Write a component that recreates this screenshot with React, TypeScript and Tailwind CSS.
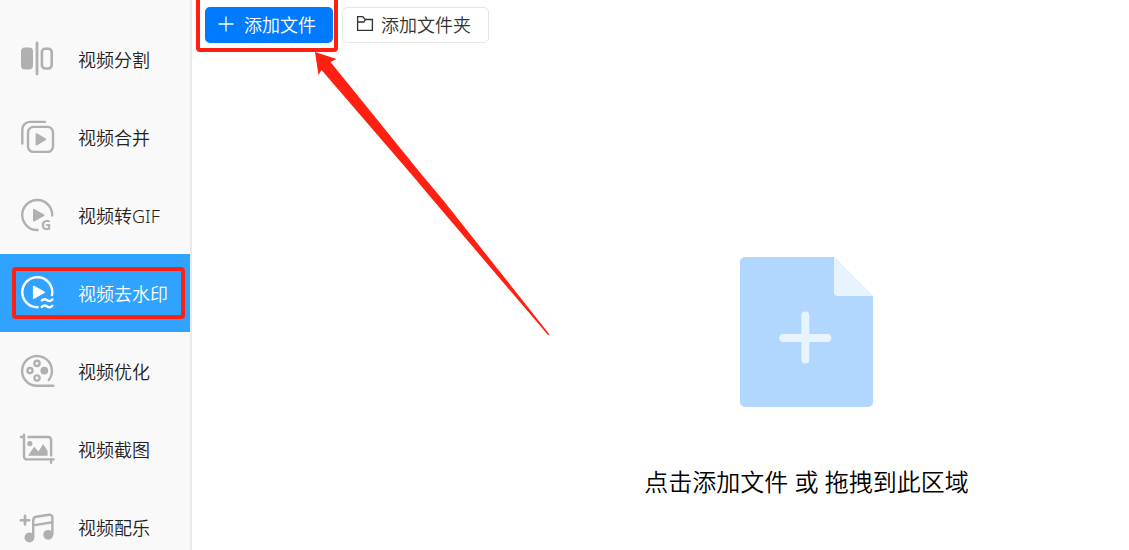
import { useRef, useState, type ReactNode } from "react";
import clsx from "clsx";

const FONT = "font-['Noto_Sans','Noto_Sans_CJK_SC',sans-serif] font-[350]";

/** Shared 36px canvas for the sidebar icons; strokes follow the text colour. */
function ToolIcon({ children }: { children: ReactNode }) {
  return (
    <svg
      viewBox="0 0 36 36"
      className="size-9 shrink-0"
      fill="none"
      stroke="currentColor"
      strokeWidth="2.4"
      strokeLinecap="round"
      strokeLinejoin="round"
      aria-hidden="true"
    >
      {children}
    </svg>
  );
}

function SplitIcon() {
  return (
    <ToolIcon>
      <rect x="2" y="6.5" width="12" height="22" rx="4" fill="currentColor" stroke="none" />
      <path d="M18 2v31" strokeWidth="2.8" />
      <rect x="22.9" y="7.7" width="9.8" height="19.8" rx="3.4" strokeWidth="2.6" />
    </ToolIcon>
  );
}

function MergeIcon() {
  return (
    <ToolIcon>
      <path d="M3.3 24.5V10.5a7.6 7.6 0 0 1 7.6-7.6H26" />
      <rect x="9" y="7.9" width="25" height="25" rx="5.5" />
      <path d="M17.4 14.9v10.8l9-5.4z" fill="currentColor" strokeWidth="1.6" />
    </ToolIcon>
  );
}

function GifIcon() {
  return (
    <ToolIcon>
      <path d="M33.2 18.5A15 15 0 1 0 18.6 33" />
      <path d="M14.8 12.6v11.2l10-5.6z" fill="currentColor" strokeWidth="1.6" />
      <text
        x="22"
        y="33.4"
        fill="currentColor"
        stroke="none"
        className="font-['Open_Sans',sans-serif] text-[14px] font-bold"
      >
        G
      </text>
    </ToolIcon>
  );
}

function WatermarkIcon() {
  return (
    <ToolIcon>
      <path d="M33 20A15 15 0 1 0 18.6 32.2" />
      <path d="M14.8 11.6v11.4l10.2-5.7z" fill="currentColor" strokeWidth="1.8" />
      <path d="M22.8 25.5c1.8-1.8 3.6-1.6 5.4-.3s3.4 1.3 5.2-.7M22.8 31.8c1.8-1.8 3.6-1.6 5.4-.3s3.4 1.3 5.2-.7" />
    </ToolIcon>
  );
}

function ReelIcon() {
  return (
    <ToolIcon>
      <path d="M29.8 27A14.9 14.9 0 1 0 18 32.8h16.4" />
      <circle cx="18" cy="10.4" r="2.6" />
      <circle cx="11" cy="17.6" r="2.6" />
      <circle cx="18" cy="25" r="2.6" />
      <circle cx="25.3" cy="17.6" r="3.9" fill="currentColor" stroke="none" />
    </ToolIcon>
  );
}

function SnapshotIcon() {
  return (
    <ToolIcon>
      <path d="M2 6h3M5 3.6v22a2.8 2.8 0 0 0 2.8 2.8h26.8" />
      <path d="M9.5 6h19.8a2.8 2.8 0 0 1 2.8 2.8V24.4M32.1 28.4v3.4" />
      <circle cx="10.8" cy="12.6" r="2.6" fill="currentColor" stroke="none" />
      <path d="M9 24.8l6.2-9 4.2 4.6 4.8-7.4 4.4 7v4.8z" fill="currentColor" stroke="none" />
    </ToolIcon>
  );
}

function MusicIcon() {
  return (
    <ToolIcon>
      <path d="M6 6.8v8.8M1.8 11.2h8.4" strokeWidth="2.6" />
      <path d="M14.2 28V11.2a3.6 3.6 0 0 1 3-3.5l13-1.9a2.8 2.8 0 0 1 3.2 2.8V25M14.2 16.4l19.2-3.2" />
      <circle cx="10.4" cy="28.5" r="4.9" fill="currentColor" stroke="none" />
      <circle cx="29.2" cy="25.8" r="4.9" fill="currentColor" stroke="none" />
    </ToolIcon>
  );
}

const TOOLS = [
  { id: "split", label: "视频分割", Icon: SplitIcon },
  { id: "merge", label: "视频合并", Icon: MergeIcon },
  { id: "gif", label: "视频转GIF", Icon: GifIcon },
  { id: "watermark", label: "视频去水印", Icon: WatermarkIcon },
  { id: "optimize", label: "视频优化", Icon: ReelIcon },
  { id: "snapshot", label: "视频截图", Icon: SnapshotIcon },
  { id: "music", label: "视频配乐", Icon: MusicIcon },
];

function Sidebar({ active, onSelect }: { active: string; onSelect: (id: string) => void }) {
  return (
    <nav className="w-48 shrink-0 overflow-hidden border-r-2 border-[#e9e9e9] bg-[#f9f9f9] pt-5">
      <ul>
        {TOOLS.map(({ id, label, Icon }) => (
          <li key={id} className="relative">
            <button
              type="button"
              onClick={() => onSelect(id)}
              aria-current={id === active ? "page" : undefined}
              className={clsx(
                "flex h-[78px] w-full cursor-pointer items-center gap-[23px] pl-[19px] text-lg",
                id === active ? "bg-[#30a2ff] text-white" : "text-[#b0b0b0]",
              )}
            >
              <Icon />
              <span className={clsx("pt-0.5", id === active ? "text-white" : "text-[#222]")}>{label}</span>
            </button>
            {id === "watermark" && (
              <span className="pointer-events-none absolute top-[13px] right-[5px] bottom-[13px] left-3 rounded-[4px] border-4 border-[#ff2012]" />
            )}
          </li>
        ))}
      </ul>
    </nav>
  );
}

function Toolbar({ onAdd }: { onAdd: () => void }) {
  return (
    <div className="flex gap-[9px] pt-[7px] pl-[13px] text-lg">
      <div className="relative">
        <button
          type="button"
          onClick={onAdd}
          className="flex h-9 cursor-pointer items-center gap-2 rounded-[5px] bg-[#007bff] pr-[17px] pl-[11px] text-white"
        >
          <svg viewBox="0 0 20 20" className="size-5" stroke="currentColor" strokeWidth="1.3" aria-hidden="true">
            <path d="M10 1.5v15M2.5 9h15" />
          </svg>
          添加文件
        </button>
        <span className="pointer-events-none absolute -top-3 -right-[5px] -bottom-[9px] -left-[9px] rounded-[4px] border-4 border-[#ff2012]" />
      </div>
      <button
        type="button"
        onClick={onAdd}
        className="flex h-9 cursor-pointer items-center gap-[6px] rounded-[5px] border border-[#e6e6e6] bg-white pr-[17px] pl-3 text-[#333]"
      >
        <svg viewBox="0 0 20 20" className="size-5" fill="none" stroke="currentColor" strokeWidth="1.3" aria-hidden="true">
          <path d="M2.6 15.4V1.6h5.2l2.4 2.9h7.2v10.9zM2.6 7h6.2l1.6-2.5" />
        </svg>
        添加文件夹
      </button>
    </div>
  );
}

function DropArea({ onAdd }: { onAdd: () => void }) {
  return (
    <button type="button" onClick={onAdd} className="mt-[214px] ml-[292px] flex cursor-pointer flex-col items-center">
      <svg viewBox="0 0 134 150" className="h-[150px] w-[134px]" aria-hidden="true">
        <path
          d="M5 0H94L133 39V145a5 5 0 0 1-5 5H5a5 5 0 0 1-5-5V5a5 5 0 0 1 5-5z"
          fill="#b1d7ff"
        />
        <path d="M94 0L133 39H98a4 4 0 0 1-4-4z" fill="#e7f4ff" />
        <path d="M65.3 58.5v44M43.3 81h44" stroke="#e7f4ff" strokeWidth="8" strokeLinecap="round" />
      </svg>
      <span className="mt-[59px] text-2xl whitespace-nowrap text-black">点击添加文件 或 拖拽到此区域</span>
    </button>
  );
}

/** Red pointer from the drop area up to the add button. */
function Pointer() {
  return (
    <svg
      viewBox="0 0 236 284"
      className="pointer-events-none absolute top-[52px] left-[315px] h-[284px] w-[236px]"
      aria-hidden="true"
    >
      <path d="M0 0L21.5 7L15.5 10L107 123L128 148L234.5 282.5L233 283L118 148L97 123L6.5 18L3.5 23z" fill="#ff2012" />
    </svg>
  );
}

export default function App() {
  const [active, setActive] = useState("watermark");
  const fileInput = useRef<HTMLInputElement>(null);
  const pickFiles = () => fileInput.current?.click();

  return (
    <div className={clsx("relative flex h-screen overflow-hidden bg-white", FONT)}>
      <Sidebar active={active} onSelect={setActive} />
      <main className="flex min-w-0 flex-1 flex-col">
        <Toolbar onAdd={pickFiles} />
        <DropArea onAdd={pickFiles} />
        <input ref={fileInput} type="file" multiple accept="video/*" aria-label="添加文件" className="hidden" />
      </main>
      <Pointer />
    </div>
  );
}
